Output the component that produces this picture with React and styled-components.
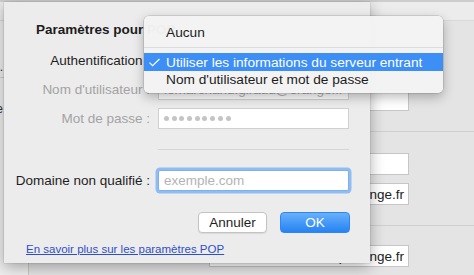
import React from "react";
import styled, { createGlobalStyle } from "styled-components";

const Global = createGlobalStyle`
  html, body { margin: 0; padding: 0; }
  body {
    width: 474px; height: 275px; overflow: hidden;
    font-family: "Liberation Sans", Arial, sans-serif;
    background: #e4e4e4;
  }
`;

const Page = styled.div`
  width: 474px; height: 275px;
  display: flex; flex-direction: column;
  overflow: hidden;
`;

const ToolbarEdge = styled.div`
  height: 2px; flex: none;
  background: #cdcdcd;
`;

const Stage = styled.div`
  position: relative;
  flex: 1;
  display: flex; flex-direction: column;
`;

/* ---------- background window ---------- */
const TopStrip = styled.div`
  height: 18px; flex: none;
  background: #ececec;
  border-bottom: 1px solid #dadada;
`;

const BgBody = styled.div`
  flex: 1; display: flex;
`;

const Sidebar = styled.div`
  width: 28px; flex: none;
  background: #eeeeee;
  border-right: 1px solid #c9c9c9;
  display: flex; flex-direction: column;
  overflow: hidden;
`;

const SideRow = styled.div`
  height: ${p => p.h}px;
  flex: none;
  display: flex; align-items: center; justify-content: flex-end;
  padding-right: 25px;
  font-size: 12px; color: #333;
  white-space: nowrap;
  border-bottom: ${p => (p.line ? "1px solid #d0d0d0" : "none")};
  box-sizing: border-box;
`;

const BgContent = styled.div`
  flex: 1; display: flex; flex-direction: column;
  padding-right: 65px;
`;

const BgSection = styled.div`
  height: ${p => p.h}px; flex: none;
  box-sizing: border-box;
  display: flex; flex-direction: column; align-items: flex-end;
  gap: 8px;
  padding-top: ${p => p.pt}px;
  border-bottom: ${p => (p.line ? "1px solid #cfcfcf" : "none")};
  margin-right: ${p => (p.line ? "-65px" : "0")};
  padding-right: ${p => (p.line ? "65px" : "0")};
`;

const BgField = styled.div`
  width: 200px; height: 22px;
  box-sizing: border-box;
  background: #fff;
  border: 1px solid #c6c6c6;
  font-size: 13.5px; color: #222;
  display: flex; align-items: center; justify-content: flex-end;
  padding-right: 4px;
  white-space: nowrap; overflow: hidden;
`;

/* ---------- sheet ---------- */
const Sheet = styled.div`
  position: absolute;
  left: 4px; top: 0;
  width: 366px; height: 261px;
  box-sizing: border-box;
  background: #ececec;
  box-shadow: 0 4px 14px rgba(0,0,0,0.32), 0 0 1px rgba(0,0,0,0.35);
  padding-top: 19px;
  display: flex; flex-direction: column;
  z-index: 2;
`;

const Title = styled.div`
  height: 17px; line-height: 17px;
  padding-left: 32px;
  font-size: 13.5px; font-weight: bold; color: #1c1c1c;
  white-space: nowrap;
`;

const FormGrid = styled.div`
  margin-top: 12px;
  display: grid;
  grid-template-columns: 146px 191px;
  grid-template-rows: 21px 21px 21px 25px 21px;
  column-gap: 8px; row-gap: 8px;
`;

const Label = styled.div`
  text-align: right;
  align-self: center;
  font-size: 13.5px;
  color: ${p => (p.disabled ? "#a3a3a3" : "#1e1e1e")};
  white-space: nowrap;
`;

const Field = styled.div`
  box-sizing: border-box;
  height: 21px;
  background: #fff;
  border: 1px solid ${p => (p.focused ? "#7fb0ec" : "#d0d0d0")};
  box-shadow: ${p => (p.focused ? "0 0 0 2.5px #8fbcf2" : "none")};
  border-radius: ${p => (p.focused ? "2px" : "0")};
  display: flex; align-items: center;
  padding-left: 5px;
  font-size: 13.5px;
  color: ${p => (p.muted ? "#b4b4b4" : "#222")};
  white-space: nowrap; overflow: hidden;
`;

const Dots = styled.div`
  display: flex; gap: 2.7px;
`;

const Dot = styled.span`
  width: 5px; height: 5px; border-radius: 50%;
  background: #c4c4c4;
`;

const PopupButton = styled.div`
  height: 21px; width: 280px;
  background: #fff; border-radius: 4px;
  box-shadow: 0 0 0 1px #c8c8c8;
`;

const Separator = styled.div`
  grid-column: 2;
  align-self: center;
  height: 1px;
  background: #d6d6d6;
`;

const ButtonRow = styled.div`
  margin-top: 21px;
  display: flex; justify-content: flex-end; gap: 13px;
  padding-right: 20px;
`;

const Button = styled.button`
  width: ${p => p.w}px; height: 21px;
  box-sizing: border-box;
  border-radius: 4px;
  font-family: inherit; font-size: 13.5px;
  padding: 0;
  cursor: default;
  ${p =>
    p.primary
      ? `
    color: #fff;
    border: 1px solid #2f86f0;
    background: linear-gradient(#68b0fa, #2583f4);
  `
      : `
    color: #1e1e1e;
    border: 1px solid #c3c3c3;
    background: #fff;
    box-shadow: 0 1px 1px rgba(0,0,0,0.08);
  `}
`;

const Link = styled.a`
  margin-top: 9px;
  padding-left: 22px;
  font-size: 11.5px; line-height: 14px;
  color: #2f4fc8;
  text-decoration: underline;
  white-space: nowrap;
`;

/* ---------- popup menu ---------- */
const Menu = styled.div`
  position: absolute;
  left: 144px; top: 14px;
  width: 299px;
  box-sizing: border-box;
  padding: 7px 0 5px;
  background: rgba(243,243,243,0.98);
  border-radius: 5px;
  box-shadow: 0 4px 12px rgba(0,0,0,0.28), 0 0 0 0.5px rgba(0,0,0,0.2);
  z-index: 5;
`;

const MenuItem = styled.div`
  height: ${p => p.h}px;
  display: flex; align-items: center;
  position: relative;
  padding-left: 22px;
  font-size: 13.7px;
  white-space: nowrap;
  color: ${p => (p.active ? "#fff" : "#1c1c1c")};
  background: ${p => (p.active ? "#3d8ef5" : "transparent")};
`;

const MenuSep = styled.div`
  height: 11px;
  display: flex; align-items: center;
  &::after { content: ""; flex: 1; height: 1px; background: #dcdcdc; }
`;

const Check = styled.svg`
  position: absolute; left: 4px; top: 5px;
`;

export default function App() {
  return (
    <Page>
      <Global />
      <ToolbarEdge />
      <Stage>
        <TopStrip />
        <BgBody>
          <Sidebar>
            <SideRow h={36} />
            <SideRow h={21} line>Utiliser SSL pour la connexion e.</SideRow>
            <SideRow h={21} />
            <SideRow h={20}>Authentifier le compte e</SideRow>
          </Sidebar>
          <BgContent>
            <BgSection h={111} pt={68} line>
              <BgField />
            </BgSection>
            <BgSection h={94} pt={21} line>
              <BgField />
              <BgField>pop.orange.fr</BgField>
            </BgSection>
            <BgSection h={60} pt={19}>
              <BgField>smtp.orange.fr</BgField>
            </BgSection>
          </BgContent>
        </BgBody>

        <Sheet>
          <Title>Paramètres pour POP</Title>
          <FormGrid>
            <Label>Authentification :</Label>
            <PopupButton />
            <Label disabled>Nom d'utilisateur :</Label>
            <Field muted>lomarchand.giraud@orange.fr</Field>
            <Label disabled>Mot de passe :</Label>
            <Field>
              <Dots aria-label="mot de passe masqué">
                {Array.from({ length: 9 }, (_, i) => <Dot key={i} />)}
              </Dots>
            </Field>
            <Separator />
            <Label>Domaine non qualifié :</Label>
            <Field focused muted>exemple.com</Field>
          </FormGrid>
          <ButtonRow>
            <Button w={69}>Annuler</Button>
            <Button w={70} primary>OK</Button>
          </ButtonRow>
          <Link>En savoir plus sur les paramètres POP</Link>
        </Sheet>

        <Menu>
          <MenuItem h={19}>Aucun</MenuItem>
          <MenuSep />
          <MenuItem h={18} active>
            <Check width="13" height="9" viewBox="0 0 13 9">
              <path d="M1.5 4.6 L4.6 7.6 L11.5 1" fill="none" stroke="#fff" strokeWidth="1.2" />
            </Check>
            Utiliser les informations du serveur entrant
          </MenuItem>
          <MenuItem h={17}>Nom d'utilisateur et mot de passe</MenuItem>
        </Menu>
      </Stage>
    </Page>
  );
}
